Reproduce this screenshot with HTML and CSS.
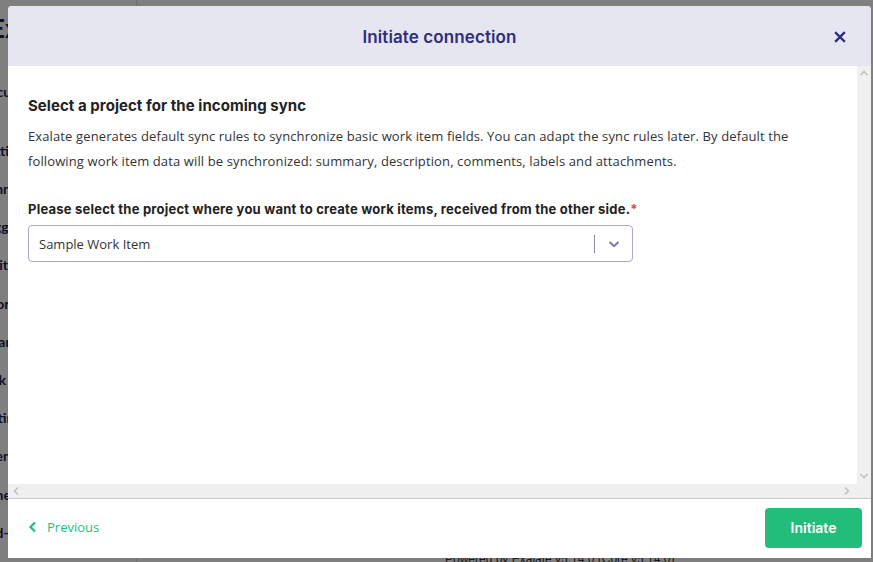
FILE: index.html
```html
<!DOCTYPE html>
<html lang="en">
<head>
<meta charset="utf-8">
<title>Initiate connection</title>
<link rel="stylesheet" href="styles.css">
</head>
<body>
<div class="page">
  <nav class="sidebar">
    <div class="logo">Exa</div>
    <div class="nav-item first">Documentation</div>
    <div class="nav-item">Getting started</div>
    <div class="nav-item">Connections are</div>
    <div class="nav-item">Triggers are</div>
    <div class="nav-item">Entity Sync</div>
    <div class="nav-item">Errors are</div>
    <div class="nav-item">Clean-ups</div>
    <div class="nav-item">Bulk connecte</div>
    <div class="nav-item">Settings</div>
    <div class="nav-item">License C</div>
    <div class="nav-item">General G</div>
    <div class="nav-item">Add-on Tools</div>
  </nav>
  <main class="content">
    <div class="spacer"></div>
    <div class="powered">Powered by Exalate v5.14.0 (Core v5.14.0)</div>
  </main>
</div>

<div class="overlay">
  <div class="modal" role="dialog" aria-labelledby="modal-title">
    <header class="modal-header">
      <h1 id="modal-title" class="modal-title">Initiate connection</h1>
      <button class="close" aria-label="Close">
        <svg width="12" height="12" viewBox="0 0 12 12"><path d="M2 2 L10 10 M10 2 L2 10" stroke="#2f2c7e" stroke-width="2.4" stroke-linecap="square"/></svg>
      </button>
    </header>
    <div class="modal-body">
      <div class="scroll-area">
        <h2 class="section-title">Select a project for the incoming sync</h2>
        <p class="desc">Exalate generates default sync rules to synchronize basic work item fields. You can adapt the sync rules later. By default the following work item data will be synchronized: summary, description, comments, labels and attachments.</p>
        <label class="field-label">Please select the project where you want to create work items, received from the other side.<span class="req">*</span></label>
        <div class="select">
          <span class="select-value">Sample Work Item</span>
          <span class="select-sep"></span>
          <span class="select-arrow">
            <svg width="14" height="10" viewBox="0 0 14 10"><path d="M2.5 3 L7 7.2 L11.5 3" fill="none" stroke="#7b77b5" stroke-width="2"/></svg>
          </span>
        </div>
      </div>
      <div class="vscroll">
        <svg width="10" height="8" viewBox="0 0 10 8"><path d="M1.5 6 L5 2.5 L8.5 6" fill="none" stroke="#c2c2c2" stroke-width="1.6"/></svg>
        <svg width="10" height="8" viewBox="0 0 10 8"><path d="M1.5 2 L5 5.5 L8.5 2" fill="none" stroke="#c2c2c2" stroke-width="1.6"/></svg>
      </div>
      <div class="hscroll">
        <svg width="8" height="10" viewBox="0 0 8 10"><path d="M6 1.5 L2.5 5 L6 8.5" fill="none" stroke="#c2c2c2" stroke-width="1.6"/></svg>
        <svg width="8" height="10" viewBox="0 0 8 10"><path d="M2 1.5 L5.5 5 L2 8.5" fill="none" stroke="#c2c2c2" stroke-width="1.6"/></svg>
      </div>
      <div class="corner"></div>
    </div>
    <footer class="modal-footer">
      <button class="prev">
        <svg width="9" height="12" viewBox="0 0 9 12"><path d="M7 1.5 L2.5 6 L7 10.5" fill="none" stroke="#1fbf7a" stroke-width="2.2"/></svg>
        <span>Previous</span>
      </button>
      <button class="primary">Initiate</button>
    </footer>
  </div>
</div>
</body>
</html>
```

FILE: styles.css
```css
* { box-sizing: border-box; }
html, body { margin: 0; height: 100%; }
body {
  font-family: "Open Sans", "Liberation Sans", sans-serif;
  color: #333;
  overflow: hidden;
  background: #fff;
}

.page {
  display: flex;
  height: 562px;
}
.sidebar {
  flex: none;
  width: 217px;
  margin-left: -80px;
  border-right: 1px solid #ddd;
  padding-top: 12px;
  display: flex;
  flex-direction: column;
  font-family: "Lato", sans-serif;
  font-weight: 700;
  color: #252048;
}
.logo {
  font-size: 26px;
  width: 100%;
  padding-left: 70px;
  height: 74px;
}
.nav-item {
  font-size: 14px;
  width: 100%;
  padding-left: 58px;
  height: 40px;
  white-space: nowrap;
}
.nav-item.first { height: 62px; }
.content {
  flex: 1;
  display: flex;
  flex-direction: column;
  padding-left: 308px;
}
.spacer { flex: 1; }
.powered {
  font-family: "Liberation Sans", sans-serif;
  font-size: 12px;
  color: #333;
  height: 10px;
  line-height: 14px;
}

.overlay {
  position: fixed;
  inset: 0;
  background: rgba(0, 0, 0, 0.5);
  padding: 6px 2px 4px 8px;
}
.modal {
  width: 863px;
  height: 552px;
  background: #fff;
  border-radius: 4px 4px 0 0;
  display: flex;
  flex-direction: column;
  overflow: hidden;
}
.modal-header {
  height: 60px;
  background: #e6e6f1;
  display: flex;
  align-items: center;
  justify-content: center;
  position: relative;
  flex: none;
  padding-top: 2px;
}
.modal-title {
  margin: 0;
  font-family: "Inter", sans-serif;
  font-size: 17px;
  font-weight: 600;
  color: #2f2c7e;
  letter-spacing: 0.1px;
}
.close {
  position: absolute;
  right: 25px;
  top: 25px;
  border: 0;
  padding: 0;
  background: none;
  width: 12px;
  height: 12px;
  display: flex;
}

.modal-body {
  flex: 1;
  display: grid;
  grid-template-columns: 1fr 14px;
  grid-template-rows: 1fr 14px;
  border-bottom: 1px solid #c8c8c8;
  min-height: 0;
}
.scroll-area {
  padding: 30px 20px 0 20px;
  overflow: hidden;
}
.section-title {
  margin: 0;
  font-family: "Inter", sans-serif;
  font-size: 15px;
  font-weight: 700;
  color: #222;
  line-height: 20px;
  letter-spacing: 0.05px;
}
.desc {
  margin: 8px 0 0 0;
  font-size: 13px;
  line-height: 25px;
  color: #333;
  letter-spacing: 0.12px;
}
.field-label {
  display: block;
  margin-top: 26px;
  font-family: "Inter", sans-serif;
  font-weight: 700;
  font-size: 13px;
  line-height: 18px;
  color: #222;
  letter-spacing: 0.22px;
}
.req { color: #e5484d; margin-left: 0; }
.select {
  margin-top: 7px;
  width: 605px;
  height: 37px;
  border: 1px solid #aaa6d4;
  border-radius: 4px;
  display: flex;
  align-items: center;
  padding-left: 10px;
}
.select-value {
  flex: 1;
  font-size: 13px;
  color: #333;
}
.select-sep {
  width: 1px;
  height: 18px;
  background: #8e8ab9;
}
.select-arrow {
  width: 37px;
  display: flex;
  justify-content: center;
  align-items: center;
}

.vscroll {
  background: #f0f0f0;
  display: flex;
  flex-direction: column;
  justify-content: space-between;
  align-items: center;
  padding: 3px 0 4px;
}
.hscroll {
  background: #f0f0f0;
  display: flex;
  justify-content: space-between;
  align-items: center;
  padding: 0 6px 0 4px;
}
.corner { background: #f0f0f0; }

.modal-footer {
  flex: none;
  height: 59px;
  display: flex;
  align-items: center;
  justify-content: space-between;
  padding: 0 9px 2px 20px;
}
.prev {
  border: 0;
  background: none;
  display: flex;
  align-items: center;
  gap: 10px;
  font-family: "Open Sans", sans-serif;
  font-size: 13px;
  color: #1fbf7a;
  padding: 0 0 2px 0;
}
.primary {
  width: 97px;
  height: 40px;
  border: 0;
  border-radius: 4px;
  background: #22bd78;
  color: #fff;
  font-family: "Inter", sans-serif;
  font-weight: 600;
  font-size: 14px;
}
```
